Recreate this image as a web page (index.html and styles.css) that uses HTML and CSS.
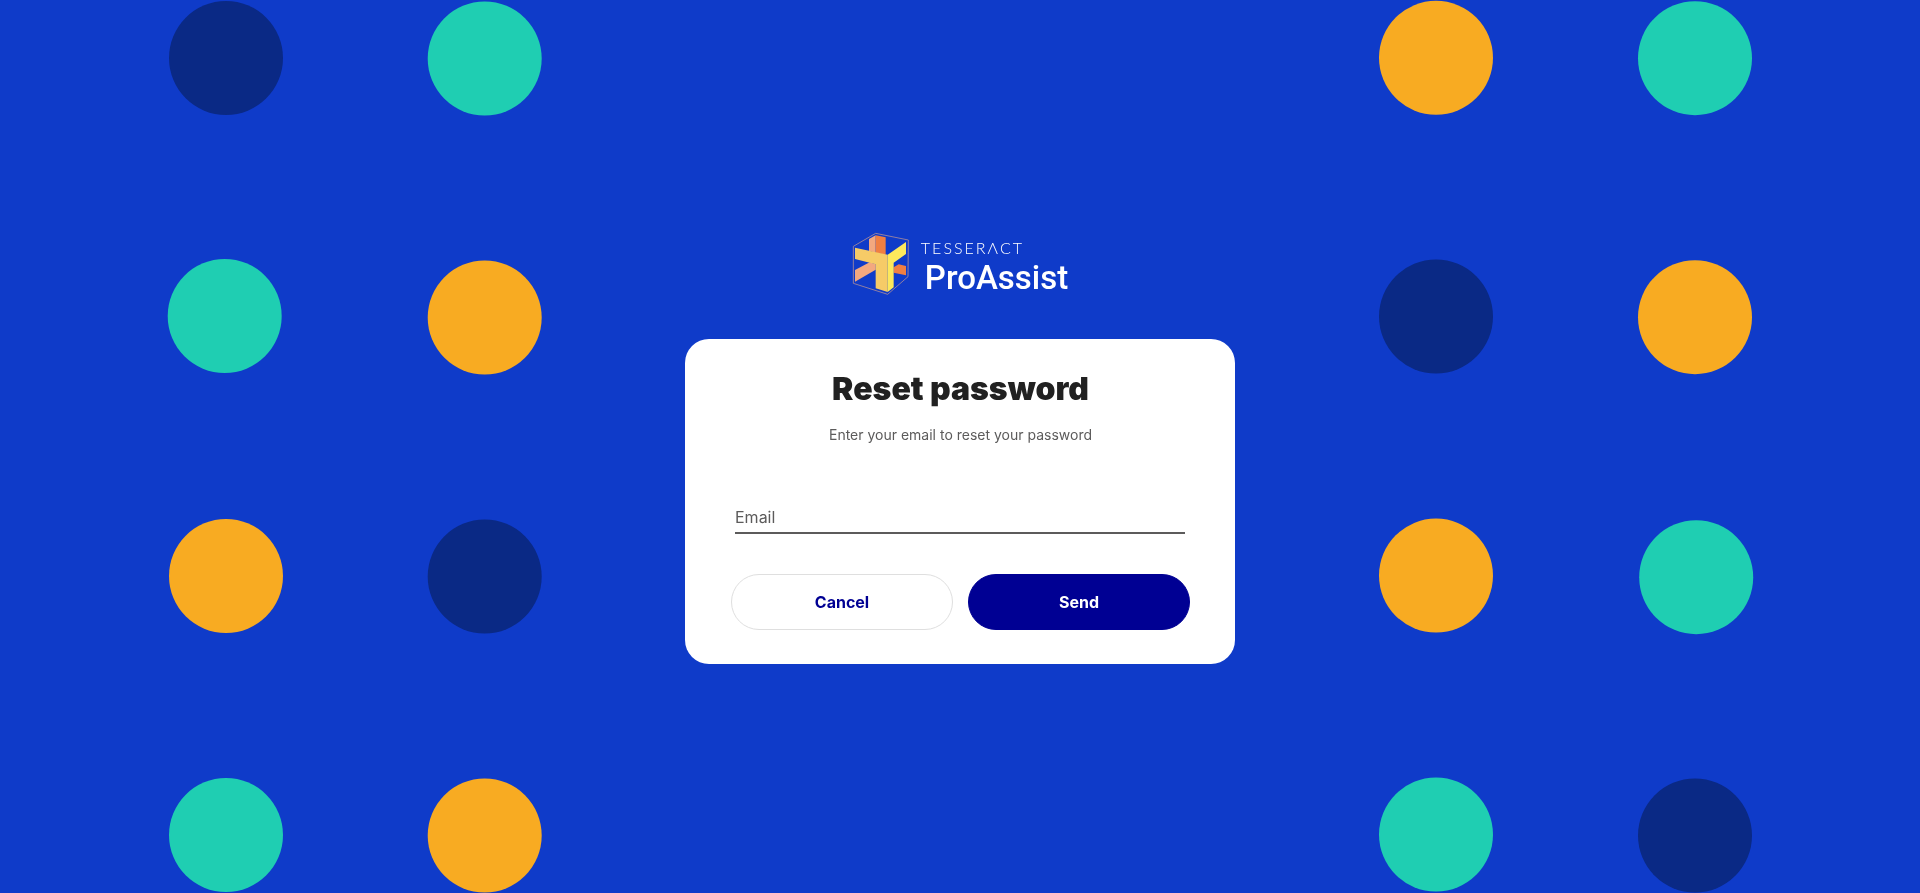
FILE: index.html
```html
<!DOCTYPE html>
<html lang="en">
<head>
<meta charset="utf-8">
<meta name="viewport" content="width=device-width, initial-scale=1">
<title>Reset password</title>
<link rel="stylesheet" href="styles.css">
</head>
<body>
<svg class="backdrop" viewBox="0 0 1920 893" preserveAspectRatio="xMidYMid slice" aria-hidden="true">
  <g class="dot-navy">
    <circle cx="226" cy="58" r="57"/><circle cx="484.7" cy="576.5" r="57"/>
    <circle cx="1436" cy="316.5" r="57"/><circle cx="1695" cy="835.5" r="57"/>
  </g>
  <g class="dot-teal">
    <circle cx="484.7" cy="58.5" r="57"/><circle cx="224.7" cy="316" r="57"/><circle cx="226" cy="835" r="57"/>
    <circle cx="1695" cy="58.2" r="57"/><circle cx="1696.2" cy="577.2" r="57"/><circle cx="1436" cy="834.5" r="57"/>
  </g>
  <g class="dot-amber">
    <circle cx="484.7" cy="317.5" r="57"/><circle cx="226" cy="576" r="57"/><circle cx="484.7" cy="835.5" r="57"/>
    <circle cx="1436" cy="57.8" r="57"/><circle cx="1695" cy="317.2" r="57"/><circle cx="1436" cy="575.6" r="57"/>
  </g>
</svg>
<main class="page">
  <div class="brand">
    <svg class="brand-mark" viewBox="36 36 174 192" aria-hidden="true">
      <path fill="#f3a87f" d="M87 57l20-11v52l-20-5z"/>
      <path fill="#f07f42" d="M107 46l30 6v52l-30-6z"/>
      <path fill="#f3a87f" d="M45 150l44-23 18 6v16l-62 36z"/>
      <path fill="#f07f42" d="M161 142l15-9 22 5v28l-37-8z"/>
      <path fill="#f6cb67" d="M45 83l98 21v112l-36-11v-72l-62-16z"/>
      <path fill="#fde85c" d="M143 104l55-38v36l-37 26v74l-18 14z"/>
      <path fill="none" stroke="#a98c9b" stroke-width="2.5" d="M40 79l67-39 98 20-1 110-61 53-103-33z"/>
    </svg>
    <div class="brand-text">
      <span class="brand-parent">TESSERΛCT</span>
      <span class="brand-name">ProAssist</span>
    </div>
  </div>
  <form class="card">
    <h1 class="title">Reset password</h1>
    <p class="subtitle">Enter your email to reset your password</p>
    <input class="field" type="email" placeholder="Email" aria-label="Email">
    <div class="actions">
      <button class="button button-outline" type="button">Cancel</button>
      <button class="button button-primary" type="submit">Send</button>
    </div>
  </form>
</main>
</body>
</html>
```

FILE: styles.css
```css
* { box-sizing: border-box; }

body {
  margin: 0;
  background: #0f3bc9;
  font-family: Inter, "Liberation Sans", sans-serif;
}

.backdrop {
  position: fixed;
  inset: 0;
  z-index: -1;
  width: 100%;
  height: 100%;
}
.dot-navy { fill: #0a2985; }
.dot-teal { fill: #1fceb2; }
.dot-amber { fill: #f8ab22; }

.page {
  display: flex;
  flex-direction: column;
  align-items: center;
  justify-content: center;
  gap: 41px;
  min-height: 100vh;
}

.brand {
  display: flex;
  align-items: center;
  gap: 11px;
  color: #fff;
}
.brand-mark { width: 58px; height: 64px; }
.brand-text {
  display: flex;
  flex-direction: column;
  padding-top: 8px;
}
.brand-parent {
  font: 300 16px/20px Lato, sans-serif;
  letter-spacing: 2px;
}
.brand-name {
  padding-left: 4px;
  font: 500 33px/40px Roboto, sans-serif;
}

.card {
  display: flex;
  flex-direction: column;
  width: 100%;
  max-width: 550px;
  padding: 30px 45px 34px 46px;
  border-radius: 24px;
  background: #fff;
}
.title {
  margin: 0;
  color: #212121;
  font-size: 32px;
  line-height: 40px;
  font-weight: 900;
  text-align: center;
}
.subtitle {
  margin: 16px 0 0;
  color: #5c5b5b;
  font-size: 14px;
  line-height: 20px;
  text-align: center;
}
.field {
  height: 32px;
  margin: 57px 5px 40px 4px;
  padding: 0;
  border: 0;
  border-bottom: 2px solid #5c5b5b;
  border-radius: 0;
  outline: 0;
  background: none;
  color: #212121;
  font: 400 16px/24px Inter, sans-serif;
}
.field::placeholder { color: #5c5b5b; opacity: 1; }

.actions { display: flex; gap: 15px; }
.button {
  flex: 1;
  height: 56px;
  border: 1px solid #000093;
  border-radius: 28px;
  font: 700 16px/24px Inter, sans-serif;
}
.button-outline {
  border-color: #dfdfdf;
  background: #fff;
  color: #000093;
}
.button-primary {
  background: #000093;
  color: #fff;
}
```
